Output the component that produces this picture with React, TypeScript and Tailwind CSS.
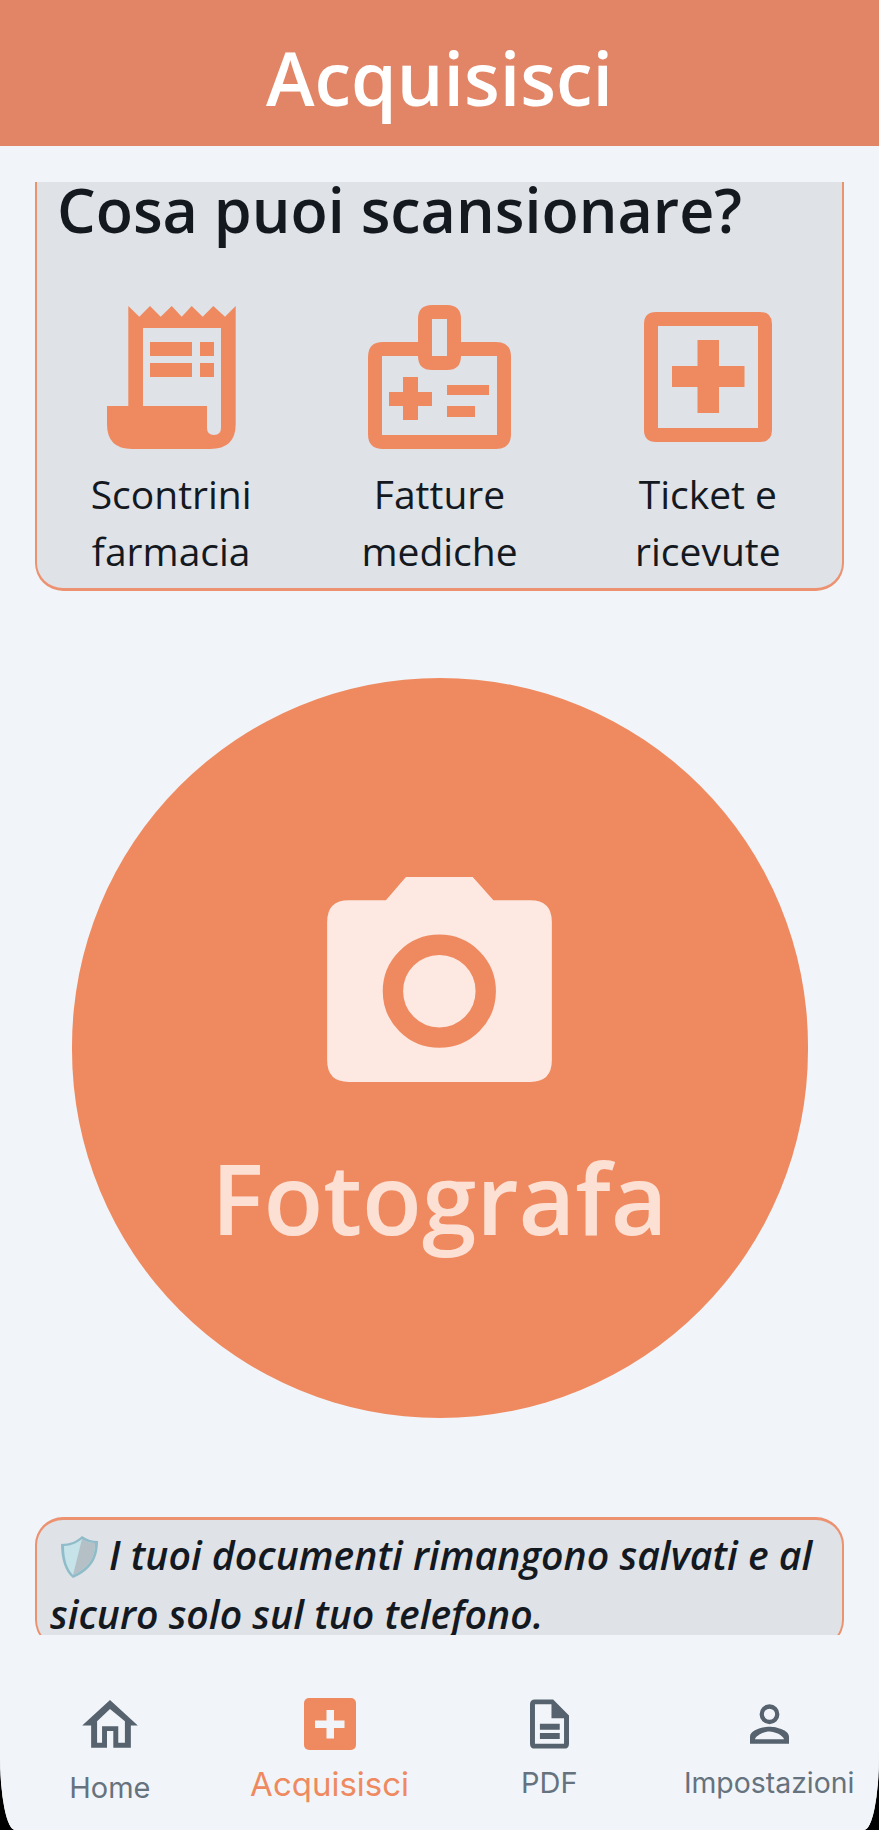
const O = "#ef8a60";
const G = "#56626e";
const LIGHT = "#fde9e1";

function Receipt() {
  return (
    <svg width="129" height="143" viewBox="0 0 129 143" className="block">
      <path
        fillRule="evenodd"
        fill={O}
        d="M21.3 0 L32.3 10.7 L43 0 L53.7 10.7 L64.7 0 L74.7 10.7 L84.7 0 L95.7 10.7 L106.3 0 L118 10.7 L128.7 0 V118 Q128.7 143 103 143 H25 Q0 143 0 118 V100 H21.3 Z M36 22 V100 H100 V122 Q100 129 107 129 Q114 129 114 122 V22 Z"
      />
      <path fill={O} d="M43 36 H85 V50 H43 Z M93 36 H107 V50 H93 Z M43 57 H85 V71 H43 Z M93 57 H107 V71 H93 Z" />
    </svg>
  );
}

function Badge() {
  return (
    <svg width="143" height="144" viewBox="13 9 143 144" className="block">
      <path
        fillRule="evenodd"
        fill={O}
        d="M28 46 H63 V23 Q63 9 77 9 H92 Q106 9 106 23 V46 H141 Q156 46 156 61 V138 Q156 153 141 153 H28 Q13 153 13 138 V61 Q13 46 28 46 Z M27 60 V139 H142 V60 H106 Q106 74 92 74 H77 Q63 74 63 60 Z M77 23 V60 H92 V23 Z"
      />
      <path
        fill={O}
        d="M48 81 H63 V96 H77 V110 H63 V124 H48 V110 H34 V96 H48 Z M92 89 H134 V99 H92 Z M92 110 H120 V121 H92 Z"
      />
    </svg>
  );
}

function MedBox() {
  return (
    <svg width="128" height="130" viewBox="0 0 128 130" className="block">
      <path
        fillRule="evenodd"
        fill={O}
        d="M12 0 H116 Q128 0 128 12 V118 Q128 130 116 130 H12 Q0 130 0 118 V12 Q0 0 12 0 Z M14 14 V116 H114 V14 Z"
      />
      <path fill={O} d="M53.500 28 H75 V54 H100.500 V75 H75 V101 H53.500 V75 H28 V54 H53.500 Z" />
    </svg>
  );
}

function Camera() {
  return (
    <svg width="225" height="205" viewBox="142 78 673 614" className="block">
      <path
        fill={LIGHT}
        d="M378 78 H578 L640 148 H750 Q815 148 815 213 V627 Q815 692 750 692 H207 Q142 692 142 627 V213 Q142 148 207 148 H318 Z"
      />
      <circle cx="478" cy="420" r="139" fill="none" stroke={O} strokeWidth="61" />
    </svg>
  );
}

function Shield() {
  return (
    <svg width="39" height="43" viewBox="0 0 39 43" className="inline-block align-[-8px] ml-[10px] mr-[10px]">
      <path d="M22 1 C26 4 32 6 38 6 C38 20 34 34 13 43 C5 37 1 24 1 9 C10 9 17 6 22 1 Z" fill="#8fbcc8" />
      <path d="M22 4 C26 7 31 8 35 8 C35 20 31 32 13 40 C7 34 4 24 4 11 C11 11 17 8 22 4 Z" fill="#c5e3e9" />
      <path d="M22 4 C26 7 31 8 35 8 C35 20 31 32 13 40 Z" fill="#b4bfc6" />
    </svg>
  );
}

function HomeIcon() {
  return (
    <svg width="56" height="48" viewBox="18 18 168 145" className="block">
      <path
        fillRule="evenodd"
        fill={G}
        d="M102 18 L186 95 H165 V162 H112 V112 H93 V162 H45 V95 H18 Z M102 45 L63 82 V147 H78 V97 H127 V147 H147 V82 Z"
      />
    </svg>
  );
}

function PlusIcon() {
  return (
    <svg width="52" height="52" viewBox="0 0 52 52" className="block">
      <rect width="52" height="52" rx="5" fill={O} />
      <path fill="#f1f5f9" d="M22.500 12 H30 V22.500 H40.500 V30 H30 V40.500 H22.500 V30 H11 V22.500 H22.500 Z" />
    </svg>
  );
}

function DocIcon() {
  return (
    <svg width="39" height="50" viewBox="90 58 118 149" className="block">
      <path
        fillRule="evenodd"
        fill={G}
        d="M105 58 H160 L208 107 V192 Q208 207 193 207 H105 Q90 207 90 192 V73 Q90 58 105 58 Z M105 73 V192 H193 V115 H155 V73 Z"
      />
      <path fill={G} d="M120 132 H180 V150 H120 Z M120 160 H180 V178 H120 Z" />
    </svg>
  );
}

function PersonIcon() {
  return (
    <svg width="39" height="40" viewBox="752 72 118 119" className="block">
      <circle cx="811" cy="102" r="23.500" fill="none" stroke={G} strokeWidth="13" />
      <path
        fillRule="evenodd"
        fill={G}
        d="M752 191 V170 C752 150 790 140 811 140 C832 140 870 150 870 170 V191 Z M767 178 H855 C852 165 827 154 811 154 C795 154 770 165 767 178 Z"
      />
    </svg>
  );
}

function Doc({ icon, a, b }: { icon: React.ReactNode; a: string; b: string }) {
  return (
    <div className="flex flex-col items-center">
      <div className="h-[144px] flex items-center justify-center">{icon}</div>
      <div className="mt-[16px] text-[39px] leading-[57px] text-center text-[#14191f]">
        {a}
        <br />
        {b}
      </div>
    </div>
  );
}

function NavItem({
  icon,
  label,
  cls,
}: {
  icon: React.ReactNode;
  label: string;
  cls: string;
}) {
  return (
    <div className="flex flex-col items-center">
      <div className="h-[52px] flex items-center justify-center">{icon}</div>
      <div className={cls}>{label}</div>
    </div>
  );
}

export default function App() {
  return (
    <div className="w-[879px] h-[1830px] bg-black">
      <div className="w-full h-full flex flex-col overflow-hidden bg-[#f1f5f9] rounded-b-[15px_75px] font-['Open_Sans',sans-serif]">
        <header className="h-[146px] shrink-0 bg-[#e28566] flex justify-center text-white">
          <h1 className="mt-[29px] text-[73.500px] leading-[98px] font-semibold">Acquisisci</h1>
        </header>

        <main className="mt-[36px] h-[1453px] shrink-0 overflow-hidden flex flex-col px-[35px]">
          <section className="-mt-[40px] shrink-0 border-2 border-b-[3px] border-[#ec9271] rounded-[28px] bg-[#dfe2e7] pt-[30px] pb-[9px]">
            <h2 className="pl-[20px] text-[61px] leading-[72px] font-semibold text-[#14191f]">
              Cosa puoi scansionare?
            </h2>
            <div className="mt-[59px] grid grid-cols-3">
              <Doc icon={<Receipt />} a="Scontrini" b="farmacia" />
              <Doc icon={<Badge />} a="Fatture" b="mediche" />
              <Doc icon={<MedBox />} a="Ticket e" b="ricevute" />
            </div>
          </section>

          <div className="mt-[87px] self-center w-[736px] h-[740px] shrink-0 rounded-full bg-[#ef8a60] flex flex-col items-center pt-[199px]">
            <Camera />
            <div className="mt-[55px] text-[98px] leading-[120px] font-semibold text-[#fde0d4]">Fotografa</div>
          </div>

          <section className="mt-[99px] shrink-0 border-2 border-t-[3px] border-[#ec9271] rounded-[28px] bg-[#dfe2e7] pt-[5px] pl-[13px] pb-[3px] text-[39.200px] leading-[59px] font-semibold italic text-[#14191f]">
            <Shield />
            I tuoi documenti rimangono salvati e al
            <br />
            sicuro solo sul tuo telefono.
          </section>
        </main>

        <nav className="mt-[37px] flex-1 grid grid-cols-4 pt-[26px] bg-[#f1f5f9] font-['Inter',sans-serif]">
          <NavItem icon={<HomeIcon />} label="Home" cls="mt-[20px] text-[29px] leading-[36px] text-[#66727d]" />
          <NavItem icon={<PlusIcon />} label="Acquisisci" cls="mt-[16px] text-[33px] leading-[36px] text-[#ef8a60]" />
          <NavItem icon={<DocIcon />} label="PDF" cls="mt-[15px] text-[29px] leading-[36px] text-[#66727d]" />
          <NavItem icon={<PersonIcon />} label="Impostazioni" cls="mt-[15px] text-[28.400px] leading-[36px] text-[#66727d]" />
        </nav>
      </div>
    </div>
  );
}
